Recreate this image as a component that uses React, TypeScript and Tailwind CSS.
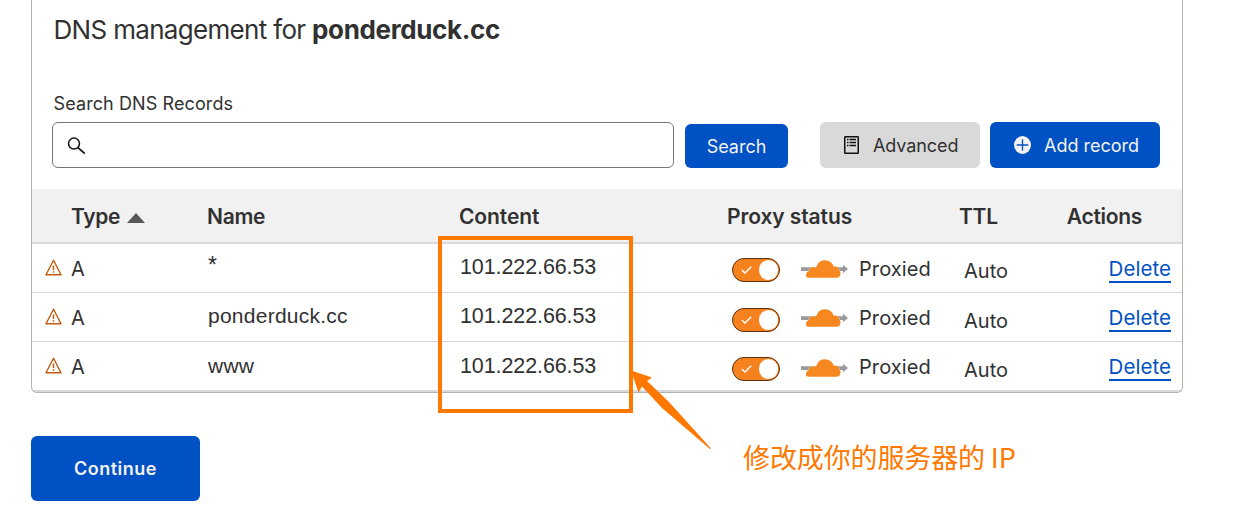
const records = [
  { name: "*", shift: "pt-0", late: "pt-0", cloud: "pt-[16px]", nameStyle: "-mt-[3px] text-[23px]" },
  { name: "ponderduck.cc", shift: "pt-0", late: "pt-px", cloud: "pt-[16px]", nameStyle: "-mt-px text-[21px]" },
  { name: "www", shift: "pt-px", late: "pt-px", cloud: "pt-[17px]", nameStyle: "-mt-px text-[21px]" },
];

const columns = "grid grid-cols-[39px_136px_252px_268px_233px_1fr]";

function SearchIcon() {
  return (
    <svg className="mt-[2px] h-[18px] w-[20px]" viewBox="0 0 20 18" fill="none" stroke="#111" strokeWidth="1.5">
      <circle cx="7" cy="6.6" r="5.5" />
      <path d="M11 10.6l6.8 6" strokeWidth="1.8" />
    </svg>
  );
}

function ListIcon() {
  return (
    <svg className="h-[18px] w-[15px]" viewBox="0 0 15 18" fill="none" stroke="#111">
      <rect x="0.75" y="0.75" width="13.5" height="16.5" rx="0.5" strokeWidth="1.5" />
      <path d="M3 3.5h1.5M3 6.5h1.5M3 9.5h1.5M5.5 3.5H12M5.5 6.5H12M5.5 9.5H12" strokeWidth="1.4" />
    </svg>
  );
}

function PlusIcon() {
  return (
    <svg className="h-[18px] w-[17px]" viewBox="0 0 17 18" fill="none">
      <ellipse cx="8.5" cy="9" rx="8.5" ry="9" fill="#f2f2f2" />
      <path d="M8.5 3.2v11.6M2.7 9h11.6" stroke="#0051c3" strokeWidth="1.3" />
    </svg>
  );
}

function WarningIcon() {
  return (
    <svg className="h-[17px] w-[17px]" viewBox="0 0 17 17" fill="none" stroke="#c35a10">
      <path d="M8.5 1.2L16 15.8H1z" strokeWidth="1.4" strokeLinejoin="round" />
      <path d="M8.5 6.5v4.6M8.5 12.2v1.6" strokeWidth="1.5" />
    </svg>
  );
}

function Toggle() {
  return (
    <span className="flex h-6 w-12 items-center justify-between rounded-full border border-[#5b2f0c] bg-[#f6821f] pr-px pl-[8px]">
      <svg className="h-2 w-[11px]" viewBox="0 0 11 8" fill="none" stroke="#fff" strokeWidth="1.4">
        <path d="M0.8 4l3.2 3L10.2 0.8" />
      </svg>
      <span className="h-5 w-[19px] rounded-full bg-white" />
    </span>
  );
}

function CloudIcon() {
  return (
    <svg className="h-[18px] w-12" viewBox="0 0 48 18">
      <path d="M0 7.2H42V4.8L47 9 42 13.2V10.9H0z" fill="#999" />
      <path
        d="M7.5 17.7C5.4 17.7 4.6 16 5.1 14.2 5.5 12.4 6.6 11.4 8 11 7.9 8.2 10.6 6.5 13.6 7.6 15 7.5 15.5 6.6 16.1 5.2 17.4 2 20.4 0.2 23.8 0.2 28.6 0.2 32 3.2 32.6 6.8 35.9 6 38.2 7.8 38.2 10.6 39.3 11.3 39.8 12.6 39.4 14.4 38.9 16.8 37.6 17.7 35.4 17.7z"
        fill="#f6881f"
        stroke="#fff"
        strokeWidth="0.6"
        paintOrder="stroke"
      />
    </svg>
  );
}

export default function App() {
  return (
    <main className="relative flex h-[520px] w-[1234px] flex-col items-start overflow-hidden bg-white pl-[31px] font-['Inter','Noto_Sans_CJK_SC',sans-serif] text-[#313131]">
      <section className="h-[393px] w-[1152px] overflow-hidden rounded-b-[6px] border border-t-0 border-[#b3b3b3]">
        <h1 className="h-[89px] pt-[12px] pl-[21.5px] text-[26px] leading-9 tracking-[-0.68px] whitespace-nowrap">
          DNS management for <strong className="font-bold tracking-[-0.36px]">ponderduck.cc</strong>
        </h1>
        <label className="block h-[33px] pt-[3px] pl-[21.5px] text-[18px] leading-6 tracking-[0.1px]">Search DNS Records</label>
        <div className="flex h-[67px] items-start pl-[20px] text-[18px]">
          <div className="flex h-[46px] w-[622px] items-center rounded-[6px] border border-[#777] pl-[14px]">
            <SearchIcon />
          </div>
          <button className="mt-[2px] ml-[11px] h-11 w-[103px] rounded-[6px] bg-[#0051c3] text-[#f2f2f2]">Search</button>
          <button className="ml-[32px] flex h-[46px] w-[160px] items-center rounded-[6px] bg-[#d9d9d9] pl-6">
            <ListIcon />
            <span className="ml-[14px] tracking-[-0.1px]">Advanced</span>
          </button>
          <button className="ml-[10px] flex h-[46px] w-[170px] items-center rounded-[6px] bg-[#0051c3] pl-6 text-[#f2f2f2]">
            <PlusIcon />
            <span className="ml-[13px]">Add record</span>
          </button>
        </div>
        <div className={`${columns} h-[55px] border-b-2 border-[#d9d9d9] bg-[#f1f1f1] pt-px text-[21px] leading-[54px] font-semibold tracking-[-0.1px] whitespace-nowrap`}>
          <span />
          <span className="flex items-center gap-[7px] tracking-[-0.3px]">
            Type
            <svg className="mt-[2px] h-[10px] w-[18px]" viewBox="0 0 18 10"><path d="M0 10L9 0l9 10z" fill="#595959" /></svg>
          </span>
          <span className="tracking-[-0.3px]">Name</span>
          <span>Content</span>
          <span className="tracking-[-0.1px]">Proxy status</span>
          <span className="flex justify-between pr-10 tracking-[-0.3px]"><span className="-ml-px">TTL</span> <span>Actions</span></span>
        </div>
        {records.map((r) => (
          <div key={r.name} className={`${columns} h-[49px] border-b border-[#d9d9d9] text-[20px] leading-[48px] whitespace-nowrap last:h-[50px] last:border-b-2`}>
            <span className="flex pt-[15px] pl-[13px]"><WarningIcon /></span>
            <span className="pt-px">A</span>
            <span className={r.shift}><span className={`block pl-px font-['Liberation_Sans',sans-serif] tracking-[0.25px] ${r.nameStyle}`}>{r.name}</span></span>
            <span className={r.shift}><span className="-mt-px block pl-px font-['Liberation_Sans',sans-serif] text-[21.5px] tracking-[-0.1px]">101.222.66.53</span></span>
            <span className="flex items-start pl-[5px]">
              <span className={r.late}><span className="block pt-[14px]"><Toggle /></span></span>
              <span className={`ml-[21px] ${r.cloud}`}><CloudIcon /></span>
              <span className="ml-[10px] pt-px tracking-[0.1px]">Proxied</span>
            </span>
            <span className="flex items-start justify-between pr-[11px] pl-1">
              <span className={r.late}><span className="block pt-[3px]">Auto</span></span>
              <a className="mt-[11px] h-7 border-b-2 border-[#0051c3] text-[20.5px] leading-[28px] tracking-[0.05px] text-[#0051c3]">Delete</a>
            </span>
          </div>
        ))}
      </section>
      <button className="mt-[43px] h-[65px] w-[169px] rounded-[6px] bg-[#0051c3] text-[18px] font-semibold tracking-[0.5px] text-[#f2f2f2]">Continue</button>
      <div className="absolute top-[236px] left-[438px] h-[177px] w-[195px] border-4 border-[#ff7800]" />
      <svg className="absolute top-[365px] left-[625px] h-[90px] w-[90px]" viewBox="625 365 90 90">
        <path d="M631 370.5L652 377.5 647 381 669 402 711 448.5 710 449 662 408 642 386.5 638.5 392.5z" fill="#ff7800" />
      </svg>
      <p className="absolute top-[437px] left-[743px] font-['Noto_Sans_CJK_SC',sans-serif] text-[27px] leading-[40px] tracking-[-0.12px] whitespace-nowrap text-[#ff7800]">修改成你的服务器的 IP</p>
    </main>
  );
}
